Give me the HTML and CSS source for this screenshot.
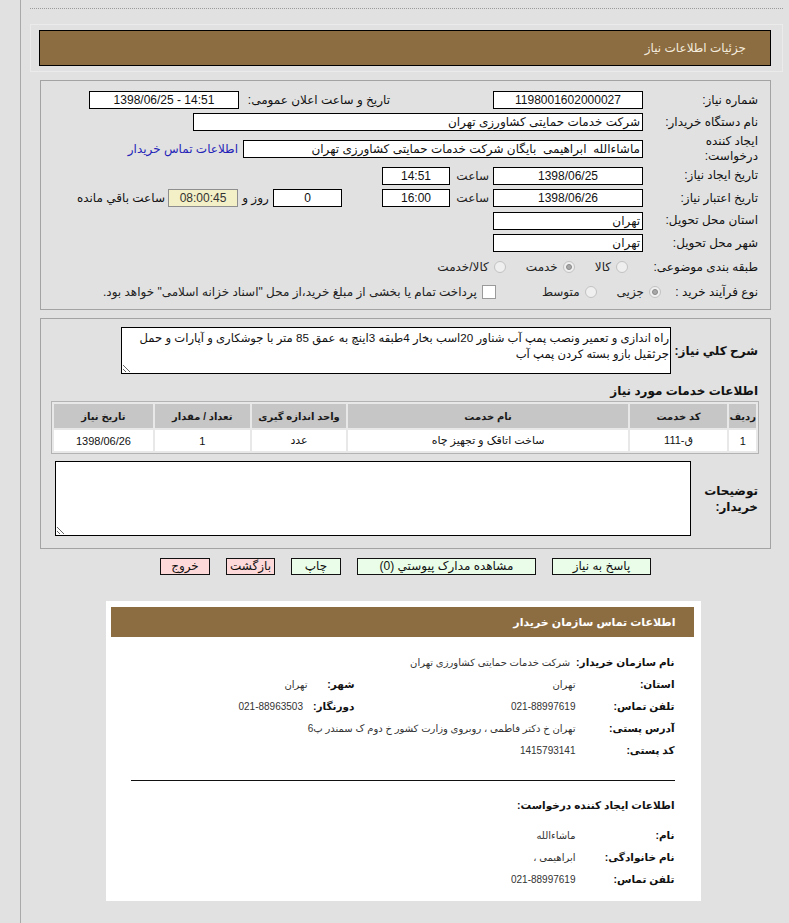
FILE: index.html
```html
<!DOCTYPE html>
<html lang="fa" dir="rtl">
<head>
  <meta charset="UTF-8">
  <title>جزئیات اطلاعات نیاز</title>
  <link rel="stylesheet" href="styles.css">
</head>
<body>
  <div class="page">
    <div class="dots"></div>

    <div class="frame">
      <div class="title-bar">جزئیات اطلاعات نیاز</div>
    </div>

    <!-- main info -->
    <div class="box info">
      <div class="row r1">
        <div class="lbl">شماره نیاز:</div>
        <div class="fld w150 c">1198001602000027</div>
        <div class="lbl2">تاریخ و ساعت اعلان عمومی:</div>
        <div class="fld w150 c" dir="ltr">1398/06/25 - 14:51</div>
      </div>
      <div class="row r2">
        <div class="lbl">نام دستگاه خریدار:</div>
        <div class="fld w450">شرکت خدمات حمایتی کشاورزی تهران</div>
      </div>
      <div class="row r3">
        <div class="lbl">ایجاد کننده<br>درخواست:</div>
        <div class="fld w400">ماشاءالله&nbsp; ابراهیمی&nbsp; بایگان شرکت خدمات حمایتی کشاورزی تهران</div>
        <a class="link" href="#">اطلاعات تماس خریدار</a>
      </div>
      <div class="row r4">
        <div class="lbl">تاریخ ایجاد نیاز:</div>
        <div class="fld w150 c">1398/06/25</div>
        <div class="txt hour">ساعت</div>
        <div class="fld w68 c">14:51</div>
      </div>
      <div class="row r5">
        <div class="lbl">تاریخ اعتبار نیاز:</div>
        <div class="fld w150 c">1398/06/26</div>
        <div class="txt hour">ساعت</div>
        <div class="fld w68 c">16:00</div>
        <div class="fld w69 c days">0</div>
        <div class="txt and">روز و</div>
        <div class="fld w70 c remain">08:00:45</div>
        <div class="txt left">ساعت باقي مانده</div>
      </div>
      <div class="row r6">
        <div class="lbl">استان محل تحویل:</div>
        <div class="fld w150">تهران</div>
      </div>
      <div class="row r7">
        <div class="lbl">شهر محل تحویل:</div>
        <div class="fld w150">تهران</div>
      </div>
      <div class="row r8">
        <div class="lbl">طبقه بندی موضوعی:</div>
        <div class="opts">
          <span class="radio"></span><span class="opt">کالا</span>
          <span class="radio on"></span><span class="opt">خدمت</span>
          <span class="radio"></span><span class="opt">کالا/خدمت</span>
        </div>
      </div>
      <div class="row r9">
        <div class="lbl narrow">نوع فرآیند خرید :</div>
        <div class="opts">
          <span class="radio on"></span><span class="opt">جزیی</span>
          <span class="radio"></span><span class="opt wide-gap">متوسط</span>
          <span class="check"></span><span class="opt">پرداخت تمام یا بخشی از مبلغ خرید،از محل "اسناد خزانه اسلامی" خواهد بود.</span>
        </div>
      </div>
    </div>

    <!-- description and services -->
    <div class="box detail">
      <div class="desc-row">
        <div class="blbl">شرح کلي نياز:</div>
        <textarea class="desc" readonly>راه اندازی و تعمیر ونصب پمپ آب شناور 20اسب بخار 4طبقه 3اینچ به عمق 85 متر با جوشکاری و آپارات و حمل جرثقیل بازو بسته کردن پمپ آب</textarea>
      </div>

      <div class="sub-title">اطلاعات خدمات مورد نياز</div>

      <table class="grid">
        <thead>
          <tr>
            <th class="c1">ردیف</th>
            <th class="c2">کد خدمت</th>
            <th class="c3">نام خدمت</th>
            <th class="c4">واحد اندازه گیری</th>
            <th class="c5">تعداد / مقدار</th>
            <th class="c6">تاریخ نیاز</th>
          </tr>
        </thead>
        <tbody>
          <tr>
            <td>1</td>
            <td>ق-111</td>
            <td>ساخت اتاقک و تجهیز چاه</td>
            <td>عدد</td>
            <td>1</td>
            <td>1398/06/26</td>
          </tr>
        </tbody>
      </table>

      <div class="notes-row">
        <div class="blbl notes-lbl">توضیحات<br>خریدار:</div>
        <textarea class="notes" readonly></textarea>
      </div>
    </div>

    <div class="buttons">
      <button class="btn b1">پاسخ به نیاز</button>
      <button class="btn b2">مشاهده مدارک پیوستي (0)</button>
      <button class="btn b3">چاپ</button>
      <button class="btn b4 red">بازگشت</button>
      <button class="btn b5 red">خروج</button>
    </div>

    <!-- buyer contact card -->
    <div class="card">
      <div class="card-head">اطلاعات تماس سازمان خریدار</div>
      <div class="card-body">
        <div class="crow">
          <div class="clbl">نام سازمان خریدار:</div>
          <div class="cval">شرکت خدمات حمایتی کشاورزی تهران</div>
        </div>
        <div class="crow">
          <div class="clbl">استان:</div>
          <div class="cval wide">تهران</div>
          <div class="clbl2">شهر:</div>
          <div class="cval">تهران</div>
        </div>
        <div class="crow">
          <div class="clbl">تلفن تماس:</div>
          <div class="cval wide">021-88997619</div>
          <div class="clbl2">دورنگار:</div>
          <div class="cval">021-88963503</div>
        </div>
        <div class="crow">
          <div class="clbl">آدرس پستی:</div>
          <div class="cval">تهران خ دکتر فاطمی ، روبروی وزارت کشور خ دوم ک سمندر پ6</div>
        </div>
        <div class="crow">
          <div class="clbl">کد پستی:</div>
          <div class="cval">1415793141</div>
        </div>

        <hr class="sep">

        <div class="crow heading">اطلاعات ایجاد کننده درخواست:</div>
        <div class="crow first">
          <div class="clbl">نام:</div>
          <div class="cval">ماشاءالله</div>
        </div>
        <div class="crow">
          <div class="clbl">نام خانوادگی:</div>
          <div class="cval">ابراهیمی ،</div>
        </div>
        <div class="crow">
          <div class="clbl">تلفن تماس:</div>
          <div class="cval">021-88997619</div>
        </div>
      </div>
    </div>
  </div>
</body>
</html>
```

FILE: styles.css
```css
:root {
  --bg: #e1e1e1;
  --brown: #8c6c41;
  --line: #a3a3a3;
  --text: #111;
  --font: "Liberation Sans", "DejaVu Sans", sans-serif;
}

* { box-sizing: border-box; }

body {
  margin: 0;
  background: var(--bg);
  color: var(--text);
  font-family: var(--font);
  font-size: 12px;
}

.page {
  margin-left: 20px;
  border-left: 1px solid #a9a9a9;
  min-height: 923px;
  padding-top: 8px;
  padding-bottom: 20px;
}

.dots {
  margin: 0 6px 0 9px;
  border-top: 1px dotted #9a9a9a;
}

.frame {
  margin: 15px 6px 0 9px;
  padding: 5px 11px 5px 8px;
  border: 1px solid #ebebeb;
}

.title-bar {
  height: 36px;
  line-height: 34px;
  background: var(--brown);
  border: 1px solid #000;
  color: #f3ebdc;
  padding-right: 24px;
  font-size: 12px;
}

/* boxes */

.box {
  margin: 8px 18px 0 19px;
  border: 1px solid var(--line);
}

.info {
  padding: 8px 12px 5px 0;
}

.row {
  display: flex;
  align-items: center;
  height: 22px;
}

.r3 { height: 31px; }
.r4 { height: 23px; }
.r6 { height: 23px; }
.r8 { height: 26px; }
.r9 { height: 24px; }

.lbl {
  width: 115px;
  flex: none;
  line-height: 15px;
}

.lbl.narrow { width: 97px; }

.lbl2 {
  width: 151px;
  margin-right: 103px;
  flex: none;
}

.fld {
  height: 18px;
  line-height: 16px;
  background: #fff;
  border: 1px solid #000;
  padding: 0 2px;
  white-space: nowrap;
  overflow: hidden;
  flex: none;
}

.fld.c { text-align: center; }

.w150 { width: 150px; }
.w450 { width: 450px; }
.w400 { width: 400px; }
.w68 { width: 68px; }
.w69 { width: 69px; }
.w70 { width: 70px; }

.days { margin-right: 40px; }

.remain {
  background: #f3efc6;
  border-color: #8e8e8e;
  color: #333;
}

.txt { flex: none; }
.hour { width: 43px; padding-right: 4px; color: #222; }
.and { width: 35px; text-align: center; }
.left { margin-right: 3px; }

.link {
  margin-right: 5px;
  color: #2424b8;
  text-decoration: none;
}

.opts {
  display: flex;
  align-items: center;
}

.r8 .opts { margin-right: 15px; }

.radio {
  width: 12px;
  height: 12px;
  border-radius: 50%;
  border: 1px solid #c2c2c2;
  background: #efefef;
  position: relative;
  flex: none;
}

.radio.on::after {
  content: "";
  position: absolute;
  left: 2px;
  top: 2px;
  width: 6px;
  height: 6px;
  border-radius: 50%;
  border: 1px solid #8a8a8a;
  background: #a8a8a8;
  box-sizing: border-box;
}

.check {
  width: 14px;
  height: 14px;
  border: 1px solid #9a9a9a;
  background: #fff;
  flex: none;
}

.opt {
  margin: 0 5px 0 20px;
  color: #222;
}

.opt.wide-gap { margin-left: 46px; }

.opts .opt:last-child { margin-left: 0; }

/* detail box */

.detail {
  padding: 8px 11px 12px 11px;
}

.desc-row {
  display: flex;
  align-items: center;
}

.blbl {
  font-weight: bold;
  font-size: 12px;
  flex: none;
  padding-right: 1px;
}

.desc-row .blbl { width: 88px; }

textarea {
  font-family: var(--font);
  font-size: 12px;
  border: 1px solid #000;
  background: #fff;
  resize: both;
  padding: 2px 2px;
  margin: 0;
  color: #111;
  line-height: 16px;
  overflow: hidden;
}

.desc {
  width: 550px;
  height: 47px;
  padding: 2px 1px;
  font-size: 11.6px;
}

.sub-title {
  font-weight: bold;
  margin-top: 8px;
  padding-right: 1px;
  height: 18px;
  line-height: 18px;
}

.grid {
  margin-top: 1px;
  width: 708px;
  border: 1px solid #b3b3b3;
  border-spacing: 2px;
  background: #e8e8e8;
  font-size: 11px;
}

.grid th {
  background: #c6c6c6;
  height: 24px;
  font-weight: bold;
  font-size: 10px;
  color: #1a1a1a;
  padding: 0;
}

.grid td {
  background: #fff;
  height: 21px;
  text-align: center;
  padding: 0;
}

.c1 { width: 25px; }
.c2 { width: 98px; }
.c3 { width: 280px; }
.c4 { width: 95px; }
.c5 { width: 95px; }
.c6 { width: 99px; }

.notes-row {
  display: flex;
  align-items: center;
  margin-top: 7px;
}

.notes-lbl {
  width: 68px;
  line-height: 16px;
}

.notes {
  width: 636px;
  height: 75px;
}

/* buttons */

.buttons {
  display: flex;
  justify-content: center;
  gap: 16px;
  margin: 9px 18px 0 19px;
}

.btn {
  height: 17px;
  padding: 0;
  border: 1px solid #111;
  background: #e9fde9;
  font-family: var(--font);
  font-size: 12px;
  line-height: 15px;
  color: #111;
  white-space: nowrap;
  overflow: visible;
}

.b1 { width: 99px; }
.b2 { width: 179px; }
.b3 { width: 50px; }
.b4 { width: 49px; }
.b5 { width: 50px; }

.btn.red { background: #fdd9d9; }

/* contact card */

.card {
  width: 595px;
  margin: 26px auto 0;
  position: relative;
  left: -2px;
  background: #fff;
  padding: 6px 7px 0 5px;
}

.card-head {
  height: 30px;
  line-height: 30px;
  background: var(--brown);
  color: #fff;
  font-weight: bold;
  font-size: 11px;
  padding-right: 18px;
}

.card-body {
  padding: 14px 19px 11px 20px;
}

.crow {
  display: flex;
  align-items: center;
  height: 22px;
  white-space: nowrap;
}

.clbl {
  min-width: 99px;
  padding-left: 6px;
  flex: none;
  font-weight: bold;
  font-size: 10.5px;
}

.clbl2 {
  min-width: 47px;
  padding-left: 10px;
  font-weight: bold;
  font-size: 10.5px;
}

.cval {
  font-size: 10px;
  color: #333;
}

.cval.wide { width: 221px; flex: none; }

.sep {
  margin: 19px 0 13px;
  border: 0;
  border-top: 1px solid #111;
}

.crow.heading {
  font-weight: bold;
  font-size: 10.5px;
}

.crow.first { margin-top: 8px; }
```
